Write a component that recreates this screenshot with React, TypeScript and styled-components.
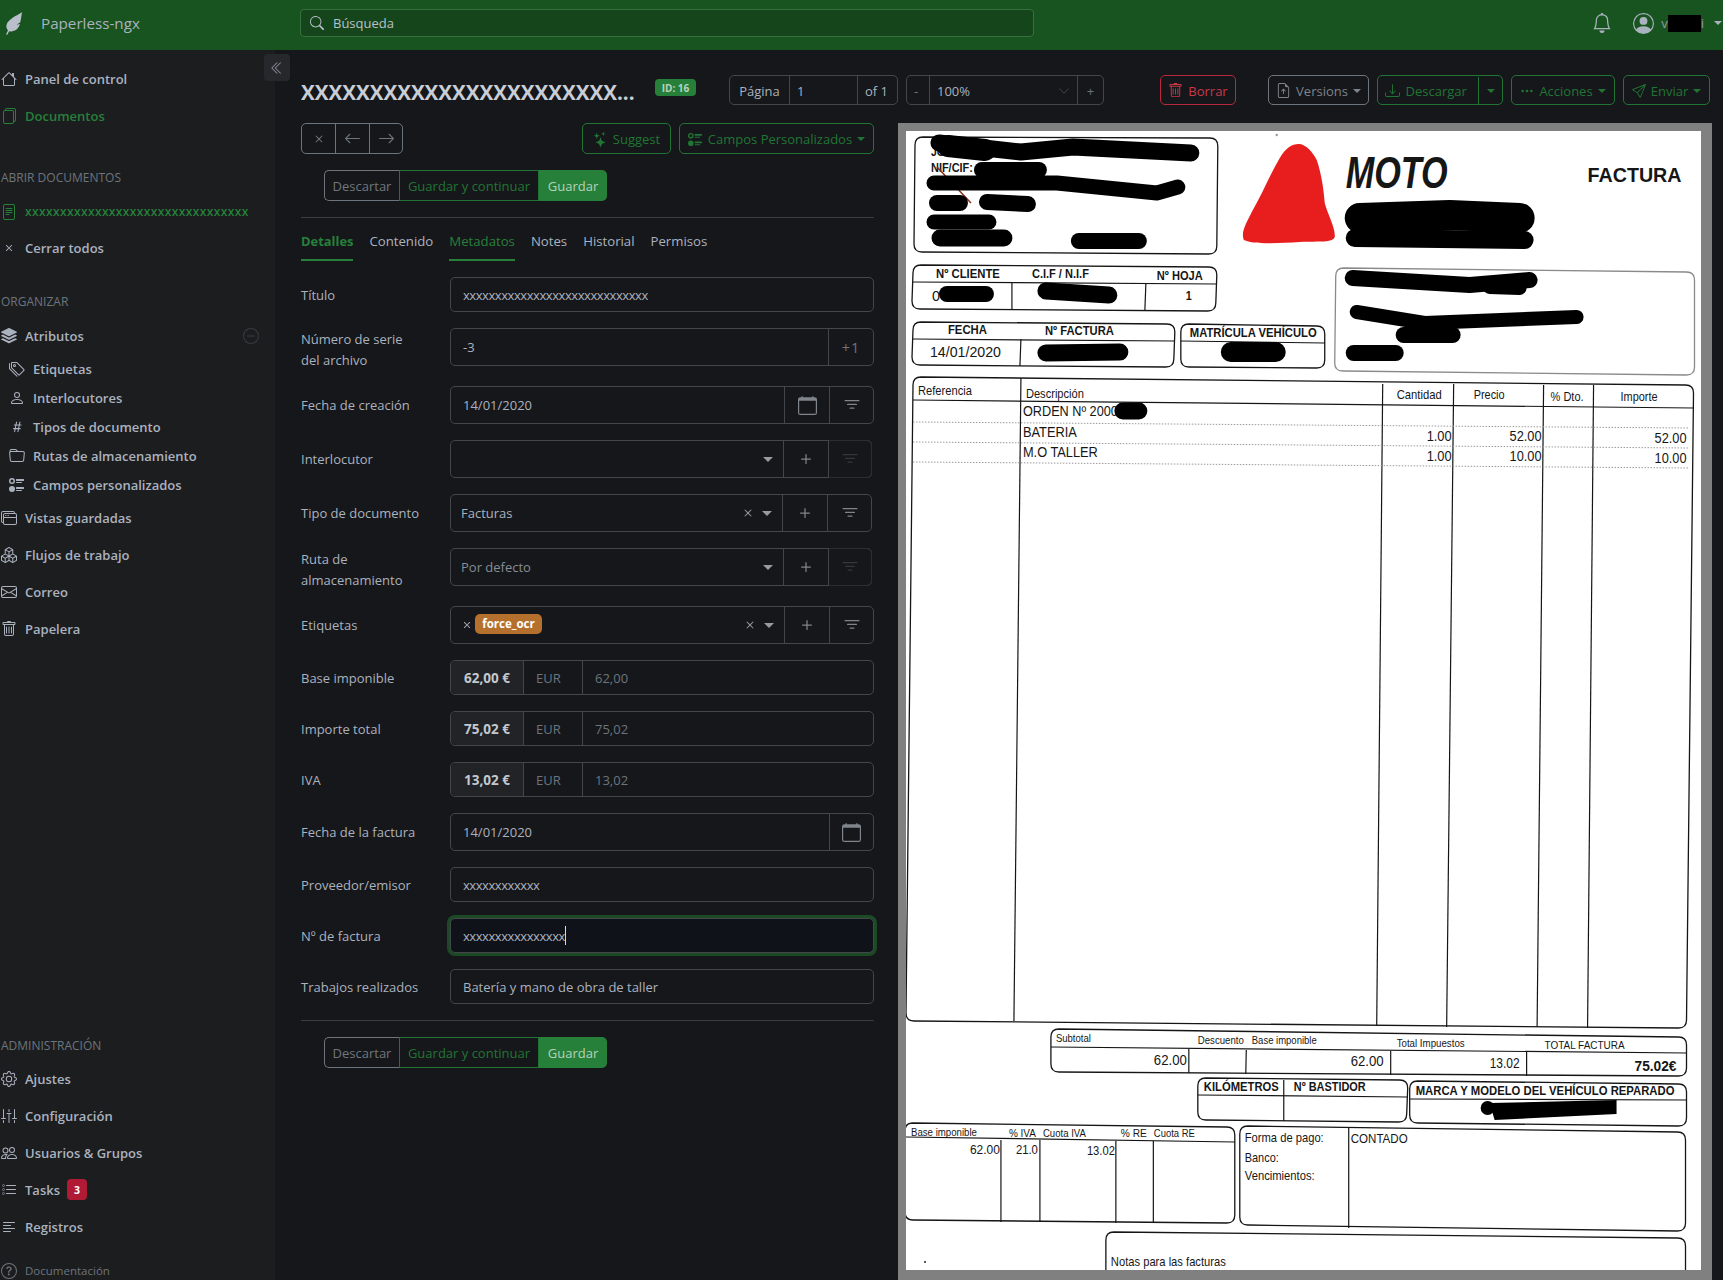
import React from "react";
import styled, { createGlobalStyle } from "styled-components";
import {
  BsArrowLeft,
  BsArrowRight,
  BsBell,
  BsBoxes,
  BsCalendar,
  BsChevronDoubleLeft,
  BsChevronDown,
  BsDashCircle,
  BsDownload,
  BsEnvelope,
  BsFileEarmarkArrowUp,
  BsFiles,
  BsFileText,
  BsFilter,
  BsFolder,
  BsGear,
  BsHash,
  BsHouse,
  BsListTask,
  BsPeople,
  BsPerson,
  BsPersonCircle,
  BsPlus,
  BsQuestionCircle,
  BsSearch,
  BsSend,
  BsSliders2Vertical,
  BsStack,
  BsStars,
  BsTags,
  BsTextLeft,
  BsThreeDots,
  BsTrash,
  BsUiRadios,
  BsWindowStack,
  BsX,
} from "react-icons/bs";

const GREEN = "#26803a";
const GREEN_DIM = "#217534";
const LINE = "#43464b";
const TEXT = "#abb2bf";

const GlobalStyle = createGlobalStyle`
  html, body {
    margin: 0;
    height: 100%;
    overflow: hidden;
    background: #16171a;
  }
  body {
    font-family: "Open Sans", "Noto Sans", sans-serif;
    font-size: 13px;
    color: ${TEXT};
  }
  * {
    box-sizing: border-box;
  }
`;

const Page = styled.div`
  display: flex;
  flex-direction: column;
  height: 1280px;
  overflow: hidden;
`;

const TopBar = styled.header`
  display: flex;
  align-items: center;
  flex: none;
  height: 50px;
  padding-bottom: 4px;
  background: #18541f;
`;

const Brand = styled.div`
  display: flex;
  align-items: center;
  flex: none;
  width: 300px;
  padding-left: 4px;
  color: #abb2bf;
  font-size: 15.2px;
  svg {
    margin-right: 17px;
  }
`;

const SearchBox = styled.div`
  display: flex;
  align-items: center;
  gap: 9px;
  width: 734px;
  height: 28px;
  padding-left: 9px;
  background: #15451b;
  border: 1px solid #39703f;
  border-radius: 4px;
  color: #b9c0cb;
`;

const TopRight = styled.div`
  display: flex;
  align-items: center;
  margin-left: auto;
  padding-right: 1px;
  color: #abb2bf;
  font-size: 13px;
`;

const UserName = styled.span`
  display: flex;
  align-items: center;
  margin-left: 7px;
  color: #8f9aa3;
`;

const Redacted = styled.span`
  display: block;
  width: 33px;
  height: 17px;
  background: #000;
`;

const DownCaret = styled.i<{ $color?: string; $size?: number }>`
  display: inline-block;
  flex: none;
  width: 0;
  height: 0;
  border-left: ${(p) => p.$size ?? 4}px solid transparent;
  border-right: ${(p) => p.$size ?? 4}px solid transparent;
  border-top: ${(p) => p.$size ?? 4}px solid ${(p) => p.$color ?? "currentColor"};
`;

const Body = styled.div`
  display: flex;
  flex: 1;
  min-height: 0;
`;

const Sidebar = styled.aside`
  position: relative;
  display: flex;
  flex-direction: column;
  flex: none;
  width: 275px;
  padding-top: 10px;
  background: #1c1d1f;
`;

const CollapseButton = styled.div`
  position: absolute;
  top: 4px;
  left: 264px;
  display: flex;
  align-items: center;
  justify-content: center;
  width: 26px;
  height: 27px;
  background: #27282b;
  border-radius: 4px;
  color: #8d949f;
`;

const Item = styled.div<{ $active?: boolean }>`
  display: flex;
  align-items: center;
  gap: 8px;
  height: 37px;
  padding-left: 1px;
  font-weight: 600;
  white-space: nowrap;
  color: ${(p) => (p.$active ? GREEN : TEXT)};
`;

const SubItem = styled(Item)`
  height: 29px;
  padding-left: 9px;
`;

const SectionHeading = styled.div<{ $top: number; $bottom?: number }>`
  height: 20px;
  line-height: 20px;
  margin-top: ${(p) => p.$top}px;
  margin-bottom: ${(p) => p.$bottom ?? 5}px;
  padding-left: 1px;
  font-size: 12px;
  color: #6c757d;
`;

const ItemDoc = styled(Item)`
  font-size: 12px;
  svg {
    color: ${GREEN};
  }
`;

const PlainX = styled(Item)`
  gap: 9px;
  height: 36px;
  padding-left: 2px;
`;

const CircleMinus = styled.span`
  display: flex;
  margin-left: auto;
  margin-right: 16px;
  color: #3a3c40;
`;

const AdminGroup = styled.div`
  margin-top: auto;
`;

const Badge = styled.span`
  display: inline-flex;
  align-items: center;
  justify-content: center;
  width: 20px;
  height: 21px;
  margin-left: -1px;
  background: #b11a35;
  border-radius: 4px;
  color: #fff;
  font-size: 10.5px;
  font-weight: 700;
`;

const DocLink = styled.div`
  display: flex;
  align-items: center;
  gap: 8px;
  height: 19px;
  margin-top: 16px;
  padding-left: 1px;
  font-size: 11.5px;
  color: #6c757d;
`;

const Main = styled.main`
  display: flex;
  flex-direction: column;
  flex: 1;
  min-width: 0;
  padding: 25px 11px 0 26px;
`;

const HeaderRow = styled.div`
  display: flex;
  align-items: center;
  flex: none;
  height: 30px;
`;

const DocTitle = styled.h1`
  flex: none;
  width: 331px;
  margin: 0;
  padding-top: 4px;
  font-size: 20.6px;
  font-weight: 700;
  line-height: 26px;
  color: #c9ced6;
  white-space: nowrap;
`;

const IdPill = styled.span`
  display: flex;
  align-items: center;
  justify-content: center;
  flex: none;
  width: 41px;
  height: 17px;
  margin: -5px 33px 0 23px;
  background: ${GREEN};
  border-radius: 4px;
  color: #b9d3bf;
  font-size: 10px;
  font-weight: 700;
`;

const Group = styled.div<{ $left?: number }>`
  display: flex;
  flex: none;
  height: 30px;
  margin-left: ${(p) => p.$left ?? 0}px;
  border: 1px solid ${LINE};
  border-radius: 5px;
`;

const Cell = styled.div<{ $width: number; $muted?: boolean; $align?: string }>`
  display: flex;
  align-items: center;
  justify-content: ${(p) => p.$align ?? "flex-start"};
  width: ${(p) => p.$width}px;
  padding: 1px 7px 0;
  color: ${(p) => (p.$muted ? "#6c757d" : TEXT)};
  & + & {
    border-left: 1px solid ${LINE};
  }
`;

const Button = styled.div<{
  $tone: "green" | "gray" | "red";
  $width: number;
  $left?: number;
  $height?: number;
}>`
  display: flex;
  align-items: center;
  justify-content: center;
  gap: 5px;
  flex: none;
  width: ${(p) => p.$width}px;
  height: ${(p) => p.$height ?? 30}px;
  margin-left: ${(p) => p.$left ?? 0}px;
  padding-top: 1px;
  border-radius: 5px;
  white-space: nowrap;
  border: 1px solid
    ${(p) => (p.$tone === "green" ? GREEN_DIM : p.$tone === "red" ? "#b8293e" : "#6c757d")};
  color: ${(p) => (p.$tone === "green" ? GREEN_DIM : p.$tone === "red" ? "#c9384a" : "#7d848c")};
`;

const SplitPart = styled.span<{ $width: number }>`
  display: flex;
  align-items: center;
  justify-content: center;
  gap: 6px;
  height: 100%;
  width: ${(p) => p.$width}px;
  & + & {
    border-left: 1px solid ${GREEN_DIM};
  }
`;

const ContentRow = styled.div`
  display: flex;
  flex: 1;
  min-height: 0;
  margin-top: 18px;
`;

const FormColumn = styled.div`
  flex: none;
  width: 573px;
  margin-right: 24px;
`;

const ToolRow = styled.div`
  display: flex;
  align-items: center;
  justify-content: space-between;
  height: 31px;
`;

const ToolRight = styled.div`
  display: flex;
  gap: 8px;
`;

const ButtonGroup = styled.div`
  display: flex;
  height: 31px;
  width: max-content;
  border: 1px solid #6c757d;
  border-radius: 5px;
`;

const GroupIcon = styled.div<{ $width: number }>`
  display: flex;
  align-items: center;
  justify-content: center;
  width: ${(p) => p.$width}px;
  color: #6c757d;
  & + & {
    border-left: 1px solid #6c757d;
  }
`;

const SaveRow = styled.div<{ $top: number }>`
  display: flex;
  width: max-content;
  height: 31px;
  margin-top: ${(p) => p.$top}px;
  margin-left: 23px;
`;

const SaveButton = styled.div<{ $kind: "discard" | "outline" | "solid"; $width: number }>`
  display: flex;
  align-items: center;
  justify-content: center;
  width: ${(p) => p.$width}px;
  ${(p) =>
    p.$kind === "discard" &&
    `border: 1px solid #6c757d; border-right: 0; border-radius: 5px 0 0 5px; color: #6f767e;`}
  ${(p) => p.$kind === "outline" && `border: 1px solid ${GREEN_DIM}; color: ${GREEN_DIM};`}
  ${(p) =>
    p.$kind === "solid" && `background: ${GREEN}; border-radius: 0 5px 5px 0; color: #b7d2bd;`}
`;

const Rule = styled.hr<{ $top: number }>`
  height: 1px;
  margin: ${(p) => p.$top}px 0 0;
  border: 0;
  background: #3a3c40;
`;

const Tabs = styled.div`
  display: flex;
  gap: 16px;
  height: 35px;
  margin-top: 8px;
`;

const Tab = styled.div<{ $active?: boolean; $strong?: boolean }>`
  display: flex;
  align-items: center;
  height: 35px;
  padding-bottom: 3px;
  border-bottom: 2px solid ${(p) => (p.$active ? GREEN : "transparent")};
  color: ${(p) => (p.$active ? GREEN : TEXT)};
  font-size: ${(p) => (p.$strong ? 12.9 : 13.2)}px;
  font-weight: ${(p) => (p.$strong ? 700 : 400)};
`;

const FormList = styled.div`
  display: flex;
  flex-direction: column;
  gap: 16px;
  margin-top: 16px;
`;

const Row = styled.div`
  display: flex;
  align-items: center;
`;

const Label = styled.div<{ $tall?: boolean }>`
  flex: none;
  width: 149px;
  margin: ${(p) => (p.$tall ? "0" : "1px 0 -1px")};
  padding-right: 30px;
  line-height: 21px;
`;

const Field = styled.div<{ $height?: number; $width?: number; $focus?: boolean }>`
  display: flex;
  align-self: flex-start;
  flex: none;
  width: ${(p) => p.$width ?? 424}px;
  height: ${(p) => p.$height ?? 35}px;
  border: 1px solid ${LINE};
  border-radius: 5px;
  ${(p) => p.$focus && `background: #10121a; box-shadow: 0 0 0 3px #1b4a24;`}
`;

const Value = styled.div<{ $pad?: number; $muted?: boolean; $dim?: boolean }>`
  display: flex;
  align-items: center;
  flex: 1;
  min-width: 0;
  padding-left: ${(p) => p.$pad ?? 12}px;
  color: ${(p) => (p.$dim ? "#6c757d" : p.$muted ? "#868d95" : TEXT)};
  white-space: nowrap;
`;

const Xs = styled.span<{ $spacing?: number }>`
  letter-spacing: ${(p) => p.$spacing ?? -0.43}px;
`;

const Caret = styled.span`
  display: block;
  width: 1px;
  height: 19px;
  background: #d6dae0;
`;

const Addon = styled.div<{ $width: number; $faint?: boolean }>`
  display: flex;
  align-items: center;
  justify-content: center;
  flex: none;
  width: ${(p) => p.$width}px;
  border-left: 1px solid ${LINE};
  color: ${(p) => (p.$faint ? "#35373b" : "#7f858d")};
  ${(p) =>
    p.$faint &&
    `height: calc(100% + 2px); margin: -1px -1px -1px 0; border: 1px solid #2b2d31; border-left-color: ${LINE}; border-radius: 0 5px 5px 0;`}
`;

const StepLabel = styled.span`
  color: #6c757d;
  font-size: 14.5px;
  letter-spacing: 1px;
`;

const SelectTools = styled.div`
  display: flex;
  align-items: center;
  gap: 6px;
  padding-right: 10px;
  color: #9a9a9a;
`;

const TagChip = styled.span`
  display: inline-flex;
  align-items: center;
  justify-content: center;
  width: 67px;
  height: 20px;
  margin-left: 1px;
  margin-top: -3px;
  background: #b5702e;
  border-radius: 5px;
  color: #fff;
  font-size: 11.5px;
  font-weight: 700;
`;

const Prefix = styled.div`
  display: flex;
  align-items: center;
  justify-content: center;
  flex: none;
  width: 73px;
  background: #212327;
  border-radius: 5px 0 0 5px;
  border-right: 1px solid ${LINE};
  color: #c3c8cf;
  font-size: 13.5px;
  font-weight: 700;
`;

const Currency = styled.div`
  display: flex;
  align-items: center;
  flex: none;
  width: 59px;
  padding-left: 12px;
  border-right: 1px solid ${LINE};
  color: #6c757d;
`;

const Viewer = styled.div`
  flex: 1;
  min-width: 0;
  padding: 8px 11px 10px 8px;
  background: #808080;
  svg {
    display: block;
    width: 100%;
    height: 100%;
    background: #fff;
  }
`;

// the scanned invoice, coordinates are window pixels of the picture
type Pt = [number, number];

const boxes: { c: [Pt, Pt, Pt, Pt]; stroke?: string }[] = [
  { c: [[915, 137], [1218, 138], [1217, 254], [914, 252]] },
  { c: [[913, 265], [1217, 267], [1216, 311], [912, 309]] },
  { c: [[913, 322], [1175, 324], [1174, 367], [912, 365]] },
  { c: [[1181, 324], [1325, 326], [1325, 368], [1181, 367]] },
  { c: [[1336, 268], [1695, 272], [1695, 375], [1335, 371]], stroke: "#8a8a8a" },
  { c: [[913, 377], [1694, 385], [1687, 1028], [906, 1021]] },
  { c: [[1051, 1029], [1687, 1037], [1687, 1076], [1051, 1072]] },
  { c: [[1198, 1078], [1408, 1080], [1407, 1122], [1198, 1120]] },
  { c: [[1410, 1081], [1687, 1084], [1687, 1126], [1410, 1123]] },
  { c: [[905, 1123], [1235, 1127], [1235, 1223], [905, 1220]] },
  { c: [[1240, 1126], [1686, 1132], [1686, 1231], [1240, 1225]] },
  { c: [[1106, 1232], [1686, 1238], [1686, 1300], [1106, 1300]] },
];

const roundedQuad = ([a, b, c, d]: [Pt, Pt, Pt, Pt], r = 8) =>
  `M${a[0] + r} ${a[1]}L${b[0] - r} ${b[1]}Q${b[0]} ${b[1]} ${b[0]} ${b[1] + r}` +
  `L${c[0]} ${c[1] - r}Q${c[0]} ${c[1]} ${c[0] - r} ${c[1]}` +
  `L${d[0] + r} ${d[1]}Q${d[0]} ${d[1]} ${d[0]} ${d[1] - r}` +
  `L${a[0]} ${a[1] + r}Q${a[0]} ${a[1]} ${a[0] + r} ${a[1]}Z`;

const rules: number[][] = [
  [913, 400, 1694, 408],
  [1021, 378, 1014, 1021],
  [1383, 384, 1377, 1026],
  [1454, 384, 1447, 1027],
  [1544, 385, 1537.5, 1027],
  [1594, 385, 1588, 1028],
  [913, 282, 1217, 284],
  [1012, 282, 1012, 310],
  [1146, 284, 1145, 311],
  [913, 339, 1175, 341],
  [1021, 339, 1020, 366],
  [1181, 341, 1325, 343],
  [1051, 1047, 1687, 1053],
  [1189, 1049, 1189, 1073],
  [1246.5, 1050, 1246, 1074],
  [1391, 1051, 1391, 1075],
  [1527, 1052, 1527, 1076],
  [1198, 1095, 1408, 1097],
  [1284, 1080, 1284, 1121],
  [1410, 1099, 1687, 1100],
  [905, 1137, 1235, 1142],
  [1001, 1140, 1001, 1222],
  [1040, 1140, 1040, 1222],
  [1116, 1141, 1116, 1223],
  [1153.5, 1141, 1153.5, 1223],
  [1349, 1127, 1349, 1228],
];

const dotted: number[][] = [
  [913, 422, 1690, 428],
  [913, 442, 1690, 448],
  [913, 462, 1690, 468],
];

// marker strokes that hide the private data
const blobs: { p: string; w: number }[] = [
  { p: "939,143 1021,152 1073,147 1191,153", w: 17 },
  { p: "948,146 985,150", w: 22 },
  { p: "982,170 1039,170", w: 16 },
  { p: "934,183 1057,183 1157,193 1178,187", w: 15 },
  { p: "937,203 960,203", w: 16 },
  { p: "987,202 1028,204", w: 16 },
  { p: "934,222 989,222", w: 15 },
  { p: "940,238 1004,238", w: 17 },
  { p: "1079,241 1139,241", w: 16 },
  { p: "1360,218 1450,215 1520,218", w: 30 },
  { p: "1355,238 1525,240", w: 18 },
  { p: "947,294 986,294", w: 16 },
  { p: "1046,291 1109,295", w: 17 },
  { p: "1046,353 1120,352", w: 17 },
  { p: "1231,352 1276,352", w: 20 },
  { p: "1353,278 1470,285 1530,280", w: 16 },
  { p: "1490,287 1520,288", w: 14 },
  { p: "1357,312 1425,323 1577,317", w: 14 },
  { p: "1404,335 1453,335", w: 16 },
  { p: "1354,353 1396,353", w: 16 },
  { p: "1123,411 1139,411", w: 17 },
];

type Ink = { t: string; x: number; to: number; y: number; s: number; b?: boolean; i?: boolean };

const inks: Ink[] = [
  { t: "JOS", x: 931, to: 952, y: 156, s: 12, b: true },
  { t: "NIF/CIF:", x: 931, to: 973, y: 172, s: 12, b: true },
  { t: "MOTO", x: 1346, to: 1448, y: 188, s: 45, b: true, i: true },
  { t: "FACTURA", x: 1588, to: 1682, y: 182, s: 21, b: true },
  { t: "Nº CLIENTE", x: 936, to: 1000, y: 278, s: 12, b: true },
  { t: "C.I.F / N.I.F", x: 1032, to: 1089, y: 278, s: 12, b: true },
  { t: "Nº HOJA", x: 1157, to: 1203, y: 280, s: 12, b: true },
  { t: "1", x: 1186, to: 1192, y: 300, s: 12, b: true },
  { t: "0", x: 932, to: 940, y: 301, s: 15 },
  { t: "FECHA", x: 948, to: 987, y: 334, s: 12, b: true },
  { t: "Nº FACTURA", x: 1045, to: 1114, y: 335, s: 12, b: true },
  { t: "14/01/2020", x: 930, to: 1001, y: 357, s: 15 },
  { t: "MATRÍCULA VEHÍCULO", x: 1190, to: 1317, y: 337, s: 12, b: true },
  { t: "Referencia", x: 918, to: 972, y: 395, s: 12 },
  { t: "Descripción", x: 1026, to: 1084, y: 398, s: 12 },
  { t: "Cantidad", x: 1397, to: 1442, y: 399, s: 12 },
  { t: "Precio", x: 1474, to: 1505, y: 399, s: 12 },
  { t: "% Dto.", x: 1551, to: 1584, y: 401, s: 12 },
  { t: "Importe", x: 1621, to: 1658, y: 401, s: 12 },
  { t: "ORDEN Nº 2000", x: 1023, to: 1118, y: 416, s: 14 },
  { t: "BATERIA", x: 1023, to: 1077, y: 437, s: 14 },
  { t: "M.O TALLER", x: 1023, to: 1098, y: 457, s: 14 },
  { t: "1.00", x: 1427, to: 1452, y: 441, s: 14 },
  { t: "52.00", x: 1510, to: 1542, y: 441, s: 14 },
  { t: "52.00", x: 1655, to: 1687, y: 443, s: 14 },
  { t: "1.00", x: 1427, to: 1452, y: 461, s: 14 },
  { t: "10.00", x: 1510, to: 1542, y: 461, s: 14 },
  { t: "10.00", x: 1655, to: 1687, y: 463, s: 14 },
  { t: "Subtotal", x: 1056, to: 1091, y: 1042, s: 11 },
  { t: "Descuento", x: 1198, to: 1244, y: 1044, s: 11 },
  { t: "Base imponible", x: 1252, to: 1317, y: 1044, s: 11 },
  { t: "Total Impuestos", x: 1397, to: 1465, y: 1047, s: 11 },
  { t: "TOTAL FACTURA", x: 1545, to: 1625, y: 1049, s: 11 },
  { t: "62.00", x: 1154, to: 1187, y: 1065, s: 14 },
  { t: "62.00", x: 1351, to: 1384, y: 1066, s: 14 },
  { t: "13.02", x: 1490, to: 1520, y: 1068, s: 14 },
  { t: "75.02€", x: 1635, to: 1677, y: 1071, s: 14, b: true },
  { t: "KILÓMETROS", x: 1204, to: 1279, y: 1091, s: 12, b: true },
  { t: "Nº BASTIDOR", x: 1294, to: 1366, y: 1091, s: 12, b: true },
  { t: "MARCA Y MODELO DEL VEHÍCULO REPARADO", x: 1416, to: 1675, y: 1095, s: 12, b: true },
  { t: "Base imponible", x: 911, to: 977, y: 1136, s: 11 },
  { t: "% IVA", x: 1009, to: 1036, y: 1137, s: 11 },
  { t: "Cuota IVA", x: 1043, to: 1086, y: 1137, s: 11 },
  { t: "% RE", x: 1121, to: 1147, y: 1137, s: 11 },
  { t: "Cuota RE", x: 1154, to: 1195, y: 1137, s: 11 },
  { t: "62.00", x: 970, to: 1000, y: 1154, s: 13 },
  { t: "21.0", x: 1016, to: 1038, y: 1154, s: 13 },
  { t: "13.02", x: 1087, to: 1115, y: 1155, s: 13 },
  { t: "Forma de pago:", x: 1245, to: 1324, y: 1142, s: 13 },
  { t: "CONTADO", x: 1351, to: 1408, y: 1143, s: 13 },
  { t: "Banco:", x: 1245, to: 1279, y: 1162, s: 13 },
  { t: "Vencimientos:", x: 1245, to: 1315, y: 1180, s: 13 },
  { t: "Notas para las facturas", x: 1111, to: 1226, y: 1266, s: 12.5 },
];

const InvoiceScan = () => (
  <svg viewBox="906 131 795.5 1139" preserveAspectRatio="none">
    <path
      d="M1299 144C1306 144 1313 152 1317 160C1322 175 1324 190 1325 203C1328 215 1336 228 1335 237C1333 243 1320 241 1300 242C1280 243 1255 245 1244 240C1241 232 1246 224 1252 212C1262 195 1270 175 1280 158C1286 148 1292 144 1299 144Z"
      fill="#e81e1e"
    />
    {boxes.map((b, i) => (
      <path key={i} d={roundedQuad(b.c)} fill="none" stroke={b.stroke ?? "#151515"} strokeWidth="1.3" />
    ))}
    {rules.map((l, i) => (
      <line key={i} x1={l[0]} y1={l[1]} x2={l[2]} y2={l[3]} stroke="#151515" strokeWidth="1.2" />
    ))}
    {dotted.map((l, i) => (
      <line
        key={i}
        x1={l[0]}
        y1={l[1]}
        x2={l[2]}
        y2={l[3]}
        stroke="#9a9a9a"
        strokeWidth="1"
        strokeDasharray="1.5 1.5"
      />
    ))}
    {inks.map((k, i) => (
      <text
        key={i}
        x={k.x}
        y={k.y}
        fontSize={k.s}
        fontWeight={k.b ? 700 : 400}
        fontStyle={k.i ? "italic" : "normal"}
        fontFamily='"Liberation Sans", Arial, sans-serif'
        fill="#161616"
        textLength={k.to - k.x}
        lengthAdjust="spacingAndGlyphs"
      >
        {k.t}
      </text>
    ))}
    <line x1="937" y1="167" x2="971" y2="203" stroke="#8b2d1d" strokeWidth="1.5" />
    {blobs.map((b, i) => (
      <polyline
        key={i}
        points={b.p}
        fill="none"
        stroke="#000"
        strokeWidth={b.w}
        strokeLinecap="round"
        strokeLinejoin="round"
      />
    ))}
    <circle cx="1488" cy="1108" r="7" fill="#000" />
    <path d="M1490 1103L1617 1100 1617 1114 1495 1120Z" fill="#000" />
    <circle cx="1277" cy="135" r="1.2" fill="#999" />
    <circle cx="925" cy="1262" r="1" fill="#222" />
  </svg>
);

const Logo = () => (
  <svg width="20" height="24" viewBox="0 0 20 24" fill="#b9c0cb">
    <path d="M18.5 1C13 4.500 4 8 2.500 14c-.5 2.400.3 4 1.500 5.200L2 23.500l1.300.3 1.800-3.600c5 1 9.500-2 10.900-7.200l-3.500.8 3.800-2.600c.7-3.200 1.200-6.500 1.700-9.700z" />
  </svg>
);

const selectRows = [
  { label: "Interlocutor", value: "", clear: false, filter: false, tall: true },
  { label: "Tipo de documento", value: "Facturas", clear: true, filter: true, tall: true },
  { label: "Ruta de almacenamiento", value: "Por defecto", clear: false, filter: false, tall: false },
];

const moneyRows = [
  { label: "Base imponible", shown: "62,00 €", raw: "62,00" },
  { label: "Importe total", shown: "75,02 €", raw: "75,02" },
  { label: "IVA", shown: "13,02 €", raw: "13,02" },
];

const SaveButtons = ({ top }: { top: number }) => (
  <SaveRow $top={top}>
    <SaveButton $kind="discard" $width={75}>
      Descartar
    </SaveButton>
    <SaveButton $kind="outline" $width={140}>
      Guardar y continuar
    </SaveButton>
    <SaveButton $kind="solid" $width={68}>
      Guardar
    </SaveButton>
  </SaveRow>
);

const App = () => {
  return (
    <Page>
      <GlobalStyle />
      <TopBar>
        <Brand>
          <Logo />
          Paperless-ngx
        </Brand>
        <SearchBox>
          <BsSearch size={14} />
          Búsqueda
        </SearchBox>
        <TopRight>
          <BsBell size={20} />
          <BsPersonCircle size={21} style={{ marginLeft: 21 }} />
          <UserName>
            v<Redacted />i
          </UserName>
          <DownCaret $size={4} style={{ marginLeft: 10 }} />
        </TopRight>
      </TopBar>
      <Body>
        <Sidebar>
          <CollapseButton>
            <BsChevronDoubleLeft size={14} />
          </CollapseButton>
          <Item>
            <BsHouse size={16} />
            Panel de control
          </Item>
          <Item $active>
            <BsFiles size={16} />
            Documentos
          </Item>
          <SectionHeading $top={34}>ABRIR DOCUMENTOS</SectionHeading>
          <ItemDoc $active>
            <BsFileText size={16} />
            <Xs $spacing={0.38}>xxxxxxxxxxxxxxxxxxxxxxxxxxxxxxxx</Xs>
          </ItemDoc>
          <PlainX>
            <BsX size={14} />
            Cerrar todos
          </PlainX>
          <SectionHeading $top={26}>ORGANIZAR</SectionHeading>
          <Item>
            <BsStack size={16} />
            Atributos
            <CircleMinus>
              <BsDashCircle size={16} />
            </CircleMinus>
          </Item>
          <SubItem>
            <BsTags size={16} />
            Etiquetas
          </SubItem>
          <SubItem>
            <BsPerson size={16} />
            Interlocutores
          </SubItem>
          <SubItem>
            <BsHash size={16} />
            Tipos de documento
          </SubItem>
          <SubItem>
            <BsFolder size={16} />
            Rutas de almacenamiento
          </SubItem>
          <SubItem>
            <BsUiRadios size={16} />
            Campos personalizados
          </SubItem>
          <Item>
            <BsWindowStack size={16} />
            Vistas guardadas
          </Item>
          <Item>
            <BsBoxes size={16} />
            Flujos de trabajo
          </Item>
          <Item>
            <BsEnvelope size={16} />
            Correo
          </Item>
          <Item>
            <BsTrash size={16} />
            Papelera
          </Item>
          <AdminGroup>
            <SectionHeading $top={0} $bottom={4}>
              ADMINISTRACIÓN
            </SectionHeading>
            <Item>
              <BsGear size={16} />
              Ajustes
            </Item>
            <Item>
              <BsSliders2Vertical size={16} />
              Configuración
            </Item>
            <Item>
              <BsPeople size={16} />
              Usuarios &amp; Grupos
            </Item>
            <Item>
              <BsListTask size={16} />
              Tasks
              <Badge>3</Badge>
            </Item>
            <Item>
              <BsTextLeft size={16} />
              Registros
            </Item>
            <DocLink>
              <BsQuestionCircle size={16} />
              Documentación
            </DocLink>
          </AdminGroup>
        </Sidebar>
        <Main>
          <HeaderRow>
            <DocTitle>XXXXXXXXXXXXXXXXXXXXXXX...</DocTitle>
            <IdPill>ID: 16</IdPill>
            <Group>
              <Cell $width={59} $align="center">
                Página
              </Cell>
              <Cell $width={68}>1</Cell>
              <Cell $width={40}>of 1</Cell>
            </Group>
            <Group $left={8}>
              <Cell $width={22} $muted>
                -
              </Cell>
              <Cell $width={148} $align="space-between">
                100%
                <BsChevronDown size={12} color="#43464b" />
              </Cell>
              <Cell $width={26} $muted $align="center">
                +
              </Cell>
            </Group>
            <Button $tone="red" $width={76} $left={56}>
              <BsTrash size={15} />
              Borrar
            </Button>
            <Button $tone="gray" $width={101} $left={32}>
              <BsFileEarmarkArrowUp size={15} />
              Versions
              <DownCaret $size={4} />
            </Button>
            <Button $tone="green" $width={126} $left={8}>
              <SplitPart $width={101}>
                <BsDownload size={15} />
                Descargar
              </SplitPart>
              <SplitPart $width={25}>
                <DownCaret $size={4} />
              </SplitPart>
            </Button>
            <Button $tone="green" $width={104} $left={8}>
              <BsThreeDots size={14} />
              Acciones
              <DownCaret $size={4} />
            </Button>
            <Button $tone="green" $width={87} $left={8}>
              <BsSend size={14} />
              Enviar
              <DownCaret $size={4} />
            </Button>
          </HeaderRow>
          <ContentRow>
            <FormColumn>
              <ToolRow>
                <ButtonGroup>
                  <GroupIcon $width={33}>
                    <BsX size={16} />
                  </GroupIcon>
                  <GroupIcon $width={34}>
                    <BsArrowLeft size={17} />
                  </GroupIcon>
                  <GroupIcon $width={33}>
                    <BsArrowRight size={17} />
                  </GroupIcon>
                </ButtonGroup>
                <ToolRight>
                  <Button $tone="green" $width={89} $height={31}>
                    <BsStars size={15} />
                    Suggest
                  </Button>
                  <Button $tone="green" $width={195} $height={31}>
                    <BsUiRadios size={15} />
                    Campos Personalizados
                    <DownCaret $size={4} />
                  </Button>
                </ToolRight>
              </ToolRow>
              <SaveButtons top={16} />
              <Rule $top={16} />
              <Tabs>
                <Tab $active $strong>
                  Detalles
                </Tab>
                <Tab>Contenido</Tab>
                <Tab $active>Metadatos</Tab>
                <Tab>Notes</Tab>
                <Tab>Historial</Tab>
                <Tab>Permisos</Tab>
              </Tabs>
              <FormList>
                <Row>
                  <Label>Título</Label>
                  <Field>
                    <Value>
                      <Xs>xxxxxxxxxxxxxxxxxxxxxxxxxxxxx</Xs>
                    </Value>
                  </Field>
                </Row>
                <Row>
                  <Label>Número de serie del archivo</Label>
                  <Field $height={38}>
                    <Value>-3</Value>
                    <Addon $width={45}>
                      <StepLabel>+1</StepLabel>
                    </Addon>
                  </Field>
                </Row>
                <Row>
                  <Label $tall>Fecha de creación</Label>
                  <Field $height={38}>
                    <Value>14/01/2020</Value>
                    <Addon $width={45}>
                      <BsCalendar size={19} />
                    </Addon>
                    <Addon $width={44}>
                      <BsFilter size={20} />
                    </Addon>
                  </Field>
                </Row>
                {selectRows.map((s) => (
                  <Row key={s.label}>
                    <Label $tall={s.tall}>{s.label}</Label>
                    <Field $height={38} $width={422}>
                      <Value $pad={10} $muted={s.value === "Por defecto"}>
                        {s.value}
                      </Value>
                      <SelectTools>
                        {s.clear && <BsX size={16} />}
                        <DownCaret $size={5} />
                      </SelectTools>
                      <Addon $width={45}>
                        <BsPlus size={20} />
                      </Addon>
                      <Addon $width={44} $faint={!s.filter}>
                        <BsFilter size={20} />
                      </Addon>
                    </Field>
                  </Row>
                ))}
                <Row>
                  <Label $tall>Etiquetas</Label>
                  <Field $height={38}>
                    <Value $pad={9}>
                      <BsX size={14} />
                      <TagChip>force_ocr</TagChip>
                    </Value>
                    <SelectTools>
                      <BsX size={16} />
                      <DownCaret $size={5} />
                    </SelectTools>
                    <Addon $width={45}>
                      <BsPlus size={20} />
                    </Addon>
                    <Addon $width={44}>
                      <BsFilter size={20} />
                    </Addon>
                  </Field>
                </Row>
                {moneyRows.map((m) => (
                  <Row key={m.label}>
                    <Label>{m.label}</Label>
                    <Field>
                      <Prefix>{m.shown}</Prefix>
                      <Currency>EUR</Currency>
                      <Value $dim>{m.raw}</Value>
                    </Field>
                  </Row>
                ))}
                <Row>
                  <Label $tall>Fecha de la factura</Label>
                  <Field $height={38}>
                    <Value>14/01/2020</Value>
                    <Addon $width={44}>
                      <BsCalendar size={19} />
                    </Addon>
                  </Field>
                </Row>
                <Row>
                  <Label>Proveedor/emisor</Label>
                  <Field>
                    <Value>
                      <Xs>xxxxxxxxxxxx</Xs>
                    </Value>
                  </Field>
                </Row>
                <Row>
                  <Label>Nº de factura</Label>
                  <Field $focus>
                    <Value>
                      <Xs>xxxxxxxxxxxxxxxx</Xs>
                      <Caret />
                    </Value>
                  </Field>
                </Row>
                <Row>
                  <Label>Trabajos realizados</Label>
                  <Field>
                    <Value>Batería y mano de obra de taller</Value>
                  </Field>
                </Row>
              </FormList>
              <Rule $top={16} />
              <SaveButtons top={16} />
            </FormColumn>
            <Viewer>
              <InvoiceScan />
            </Viewer>
          </ContentRow>
        </Main>
      </Body>
    </Page>
  );
};

export default App;
